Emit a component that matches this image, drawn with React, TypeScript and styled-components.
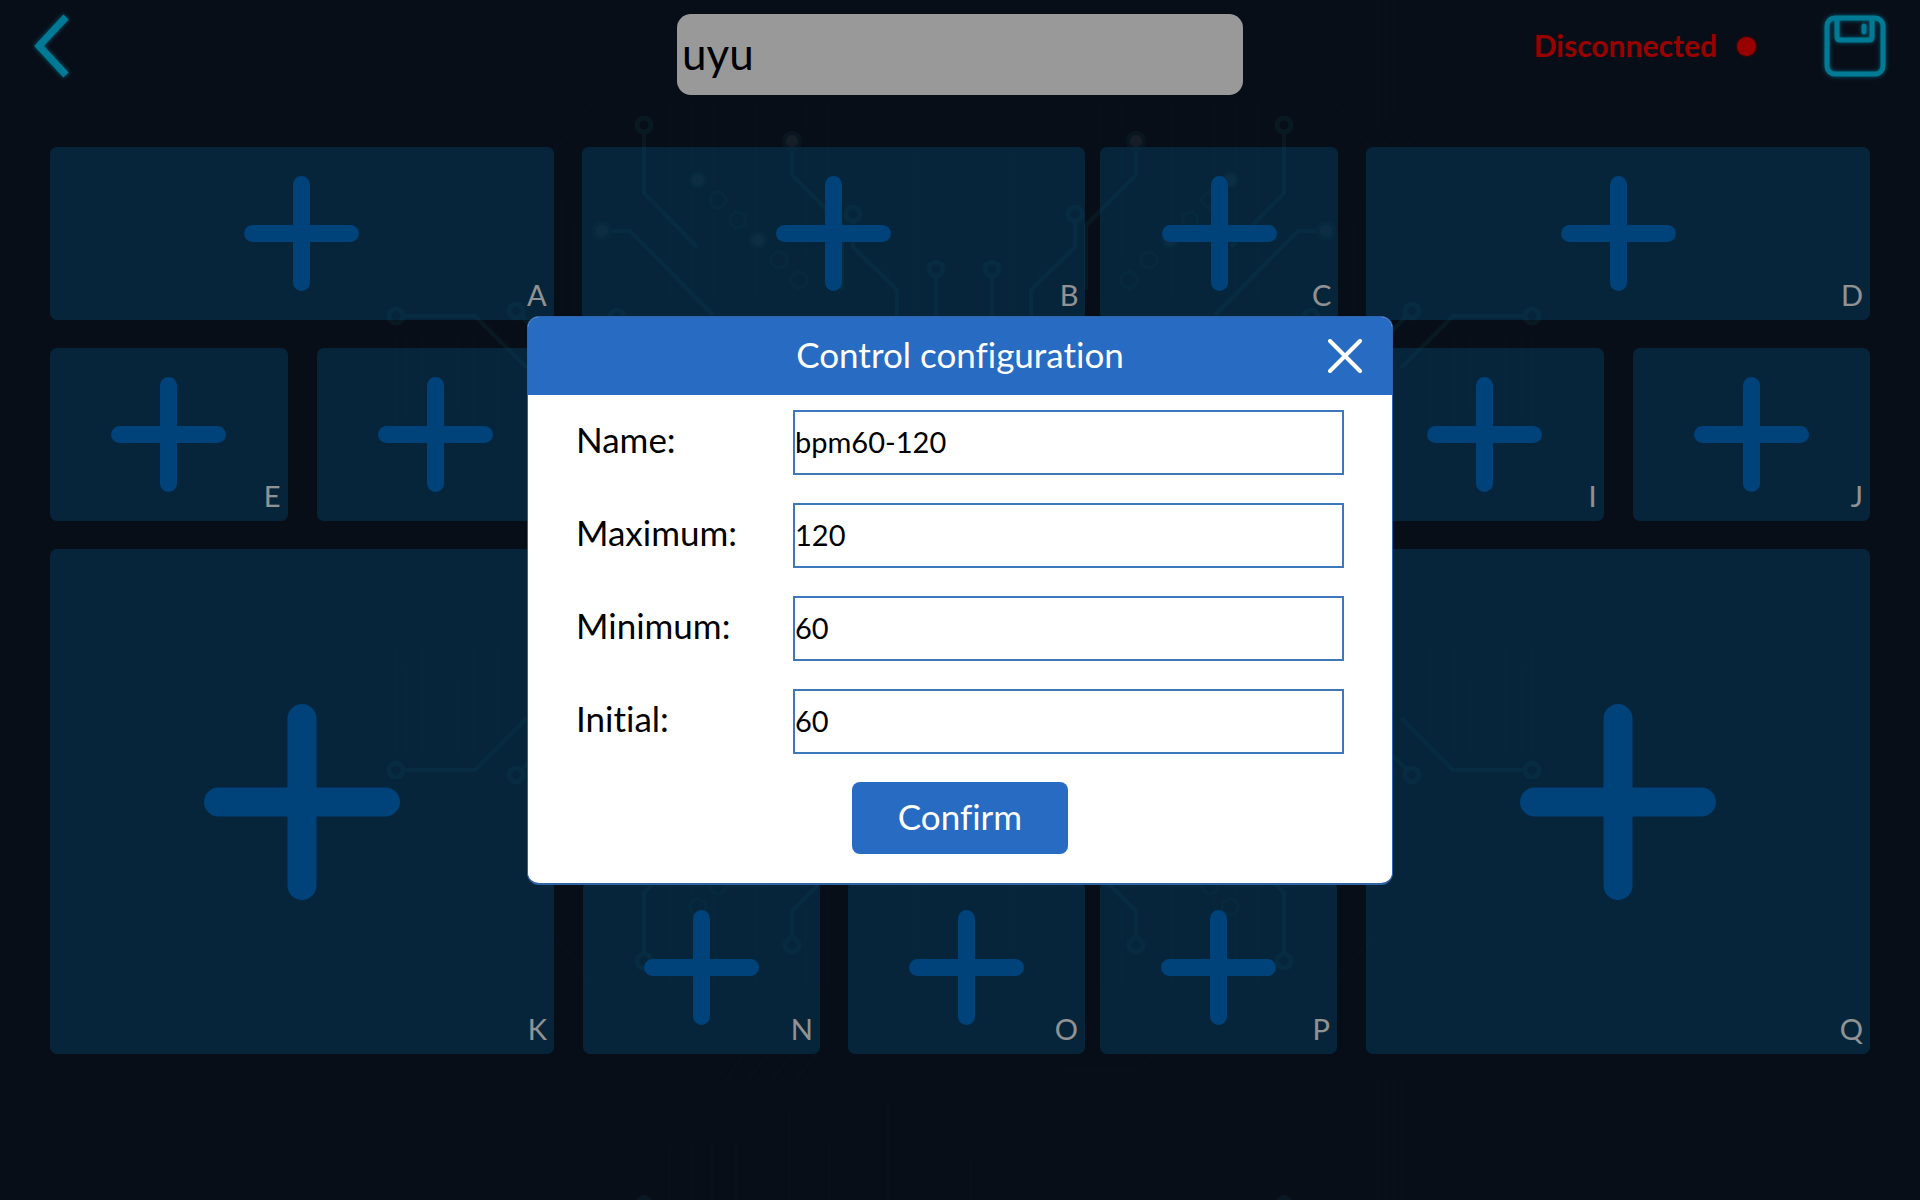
import React, { useState } from "react";
import styled, { createGlobalStyle } from "styled-components";

const GlobalStyle = createGlobalStyle`
  *, *::before, *::after { box-sizing: border-box; }
  body {
    margin: 0;
    background: #0d1829;
    font-family: Lato, "Noto Sans", sans-serif;
    font-variant-ligatures: none;
  }
  button, input { font: inherit; font-variant-ligatures: none; }
`;

const Page = styled.div`
  position: relative;
  min-height: 100vh;
  overflow: hidden;
`;

const Backdrop = styled.svg`
  position: absolute;
  inset: 0;
  width: 100%;
  height: 100%;
  fill: none;
  stroke: #1d6a78;
  stroke-width: 4;
`;

const Header = styled.header`
  position: relative;
  display: grid;
  grid-template-columns: 1fr minmax(0, 566px) 1fr;
  align-items: start;
  padding: 14px 33px 52px;
`;

const IconButton = styled.button`
  display: block;
  padding: 0;
  border: 0;
  background: none;
  cursor: pointer;

  svg {
    display: block;
    overflow: visible;
    fill: none;
    stroke: #00cbf8;
    filter: drop-shadow(0 0 2px #00a6d0);
  }
`;

const TitleInput = styled.input`
  width: 100%;
  height: 81px;
  padding: 0 5px 4px;
  border: 0;
  border-radius: 14px;
  background: #ffffff;
  color: #000000;
  font-size: 44px;
  outline: none;
`;

const HeaderRight = styled.div`
  display: flex;
  justify-content: flex-end;
  align-items: center;
  height: 64px;
`;

const Status = styled.span`
  padding-bottom: 3px;
  color: #ff0000;
  font-size: 30px;
  font-weight: 700;
`;

const StatusDot = styled.span`
  width: 19px;
  height: 19px;
  margin: 0 67px 0 20px;
  border-radius: 50%;
  background: #ff0000;
  box-shadow: 0 0 3px #c00000;
`;

const Board = styled.main`
  position: relative;
  display: grid;
  gap: 28px;
  padding: 0 50px 146px;
`;

const Columns = styled.div<{ $tracks: string; $gap?: number }>`
  display: grid;
  grid-template-columns: ${(p) => p.$tracks};
  gap: ${(p) => p.$gap ?? 29}px;
`;

const Stack = styled.div`
  display: grid;
  grid-template-rows: 1fr auto;
  gap: 28px;
`;

const TileButton = styled.button<{ $height?: number }>`
  display: grid;
  place-items: center;
  min-width: 0;
  min-height: ${(p) => p.$height ?? 173}px;
  padding: 0;
  border: 0;
  border-radius: 7px;
  background: rgba(7, 102, 155, 0.5);
  cursor: pointer;

  > * { grid-area: 1 / 1; }
`;

const PlusIcon = styled.svg`
  stroke: #006ecb;
  stroke-linecap: round;
  stroke-width: 17;
`;

const TileLabel = styled.span`
  place-self: end;
  padding: 0 7px 7px;
  color: #f4f4f4;
  font-size: 29px;
  line-height: 36px;
`;

const Overlay = styled.div`
  position: fixed;
  inset: 0;
  display: grid;
  place-items: center;
  background: rgba(0, 0, 0, 0.4);
`;

const Dialog = styled.form`
  width: 866px;
  max-width: 100%;
  overflow: hidden;
  border: 1px solid #2f65a8;
  border-bottom-width: 2px;
  border-radius: 12px;
  background: #ffffff;
`;

const DialogHeader = styled.div`
  display: grid;
  grid-template-columns: 34px 1fr 34px;
  align-items: center;
  height: 78px;
  padding: 0 30px;
  background: #286bc2;
  color: #ffffff;
`;

const DialogTitle = styled.h1`
  grid-column: 2;
  margin: 0;
  padding-bottom: 4px;
  font-size: 35px;
  font-weight: 400;
  text-align: center;
`;

const CloseButton = styled.button`
  padding: 0;
  border: 0;
  background: none;
  cursor: pointer;

  svg {
    display: block;
    stroke: #ffffff;
    stroke-width: 4;
    stroke-linecap: round;
  }
`;

const Fields = styled.div`
  display: grid;
  gap: 28px;
  padding: 15px 48px 29px;
`;

const Field = styled.div`
  display: grid;
  grid-template-columns: 217px 1fr;
  align-items: center;
`;

const FieldLabel = styled.label`
  padding-bottom: 7px;
  color: #000000;
  font-size: 35px;
`;

const FieldInput = styled.input`
  width: 100%;
  height: 65px;
  padding: 0 0 2px;
  border: 2px solid #3d78bd;
  border-radius: 0;
  background: #ffffff;
  color: #000000;
  font-size: 29px;
  outline: none;
`;

const ConfirmButton = styled.button`
  justify-self: center;
  width: 216px;
  height: 72px;
  padding: 0 0 4px;
  border: 0;
  border-radius: 8px;
  background: #286bc2;
  color: #ffffff;
  font-size: 35px;
  cursor: pointer;
`;

function Circuit() {
  return (
    <Backdrop viewBox="0 0 1920 1200" preserveAspectRatio="xMidYMid slice" aria-hidden="true">
      <defs>
        <g id="quarter">
          <g opacity="0.22">
            <g strokeWidth="5">
              <circle cx="644" cy="125" r="7" />
              <circle cx="853" cy="214" r="7" />
              <circle cx="936" cy="269" r="7" />
              <circle cx="396" cy="316" r="7" />
              <circle cx="516" cy="311" r="7" />
              <circle cx="617" cy="317" r="7" />
            </g>
            <path d="M644 134V193L697 247" />
            <path d="M792 151V175L842 225V290" />
            <path d="M612 231H630L713 315" />
            <path d="M853 223V247L897 290V340" />
            <path d="M936 278V340" />
            <path d="M405 316H475L527 368" />
            <path d="M522 317L550 345" />
          </g>
          <g opacity="0.15" strokeWidth="3">
            <circle cx="718" cy="200" r="8" />
            <circle cx="738" cy="220" r="8" />
            <circle cx="779" cy="260" r="8" />
            <circle cx="799" cy="280" r="8" />
          </g>
          <g opacity="0.05" strokeWidth="2">
            <path d="M670 98V300M692 105V300M714 98V300M736 110V300M756 100V300M806 98V260M828 98V300M888 98V300M915 120V316M555 150L592 104M396 330V440M406 330V420M422 330V440M458 330V410M474 330V440M498 330V440M562 200V440M575 220V440" />
          </g>
        </g>
        <g id="dots" stroke="none">
          <g fill="#1d6a78" opacity="0.16">
            <circle cx="792" cy="141" r="10" />
            <circle cx="698" cy="180" r="9" />
            <circle cx="758" cy="240" r="9" />
            <circle cx="602" cy="231" r="10" />
          </g>
          <g fill="#a0707c" opacity="0.16">
            <circle cx="792" cy="141" r="6" />
            <circle cx="698" cy="180" r="6" />
            <circle cx="758" cy="240" r="6" />
            <circle cx="602" cy="231" r="6" />
          </g>
        </g>
        <g id="rings">
          <circle cx="792" cy="945" r="7" strokeWidth="5" opacity="0.22" />
          <circle cx="698" cy="907" r="8" strokeWidth="3" opacity="0.15" />
        </g>
        <g id="half">
          <use href="#quarter" />
          <use href="#quarter" transform="matrix(-1 0 0 1 1928 0)" />
        </g>
      </defs>
      <use href="#half" />
      <use href="#half" transform="matrix(1 0 0 -1 0 1086)" />
      <use href="#dots" />
      <use href="#dots" transform="matrix(-1 0 0 1 1928 0)" />
      <use href="#rings" />
      <use href="#rings" transform="matrix(-1 0 0 1 1928 0)" />
      <g fill="#1d6a78" stroke="none" opacity="0.22">
        <circle cx="644" cy="1203" r="8" />
        <circle cx="1284" cy="1203" r="8" />
      </g>
      <g opacity="0.05" strokeWidth="2">
        <path d="M1368 0V130L1392 147M1377 0V128L1404 147M1386 0V126L1414 147M1394 0V118L1424 147" />
        <path d="M1368 1080V1200M1377 1080V1200M1386 1080V1200M1394 1080V1200M1402 1080V1200" />
        <path d="M670 1145V1200M692 1145V1200M712 1145V1200M736 1145V1200M790 1110V1200M830 1142V1200M888 1103V1200M970 1160V1200" />
        <path d="M744 1054L726 1080M768 1054L748 1080M792 1054L772 1080M816 1054L796 1080M1040 1054L1056 1070H1140L1154 1054" />
      </g>
    </Backdrop>
  );
}

type TileProps = { label?: string; large?: boolean };

function Tile({ label, large }: TileProps) {
  const size = large ? 196 : 115;
  return (
    <TileButton type="button" $height={large ? 505 : 173}>
      <PlusIcon width={size} height={size} viewBox="0 0 115 115" aria-hidden="true">
        <path d="M57.5 8.5V106.5M8.5 57.5H106.5" />
      </PlusIcon>
      {label && <TileLabel>{label}</TileLabel>}
    </TileButton>
  );
}

const FIELDS = [
  { id: "name", label: "Name:", value: "bpm60-120" },
  { id: "maximum", label: "Maximum:", value: "120" },
  { id: "minimum", label: "Minimum:", value: "60" },
  { id: "initial", label: "Initial:", value: "60" },
];

export default function App() {
  const [open, setOpen] = useState(true);
  const close = () => setOpen(false);

  return (
    <Page>
      <GlobalStyle />
      <Circuit />
      <Header>
        <IconButton type="button" aria-label="Back">
          <svg width="36" height="64" viewBox="0 0 36 64">
            <path d="M33 3L6 32L33 61" strokeWidth="7" />
          </svg>
        </IconButton>
        <TitleInput aria-label="Title" defaultValue="uyu" />
        <HeaderRight>
          <Status>Disconnected</Status>
          <StatusDot />
          <IconButton type="button" aria-label="Save">
            <svg width="64" height="64" viewBox="0 0 64 64">
              <rect x="4" y="4" width="56" height="56" rx="8" strokeWidth="5" />
              <path d="M14 5V23Q14 26 17 26H46Q49 26 49 23V5" strokeWidth="5" />
              <path d="M41 12V18" strokeWidth="5" strokeLinecap="round" />
            </svg>
          </IconButton>
        </HeaderRight>
      </Header>

      <Board>
        <Columns $tracks="504fr 757fr 504fr" $gap={28}>
          <Tile label="A" />
          <Columns $tracks="504fr 238fr" $gap={15}>
            <Tile label="B" />
            <Tile label="C" />
          </Columns>
          <Tile label="D" />
        </Columns>
        <Columns $tracks="504fr 754fr 504fr">
          <Columns $tracks="1fr 1fr">
            <Tile label="E" />
            <Tile />
          </Columns>
          <Columns $tracks="1fr 1fr">
            <Tile />
            <Tile />
          </Columns>
          <Columns $tracks="1fr 1fr">
            <Tile label="I" />
            <Tile label="J" />
          </Columns>
        </Columns>
        <Columns $tracks="504fr 754fr 504fr">
          <Tile label="K" large />
          <Stack>
            <Columns $tracks="1fr 1fr">
              <Tile />
              <Tile />
            </Columns>
            <Columns $tracks="502fr 237fr" $gap={15}>
              <Columns $tracks="1fr 1fr" $gap={28}>
                <Tile label="N" />
                <Tile label="O" />
              </Columns>
              <Tile label="P" />
            </Columns>
          </Stack>
          <Tile label="Q" large />
        </Columns>
      </Board>

      {open && (
        <Overlay>
          <Dialog
            role="dialog"
            aria-labelledby="dialog-title"
            onSubmit={(e) => {
              e.preventDefault();
              close();
            }}
          >
            <DialogHeader>
              <DialogTitle id="dialog-title">Control configuration</DialogTitle>
              <CloseButton type="button" aria-label="Close" onClick={close}>
                <svg width="34" height="34" viewBox="0 0 34 34">
                  <path d="M2 2L32 32M32 2L2 32" />
                </svg>
              </CloseButton>
            </DialogHeader>
            <Fields>
              {FIELDS.map((f) => (
                <Field key={f.id}>
                  <FieldLabel htmlFor={f.id}>{f.label}</FieldLabel>
                  <FieldInput id={f.id} defaultValue={f.value} />
                </Field>
              ))}
              <ConfirmButton type="submit">Confirm</ConfirmButton>
            </Fields>
          </Dialog>
        </Overlay>
      )}
    </Page>
  );
}
